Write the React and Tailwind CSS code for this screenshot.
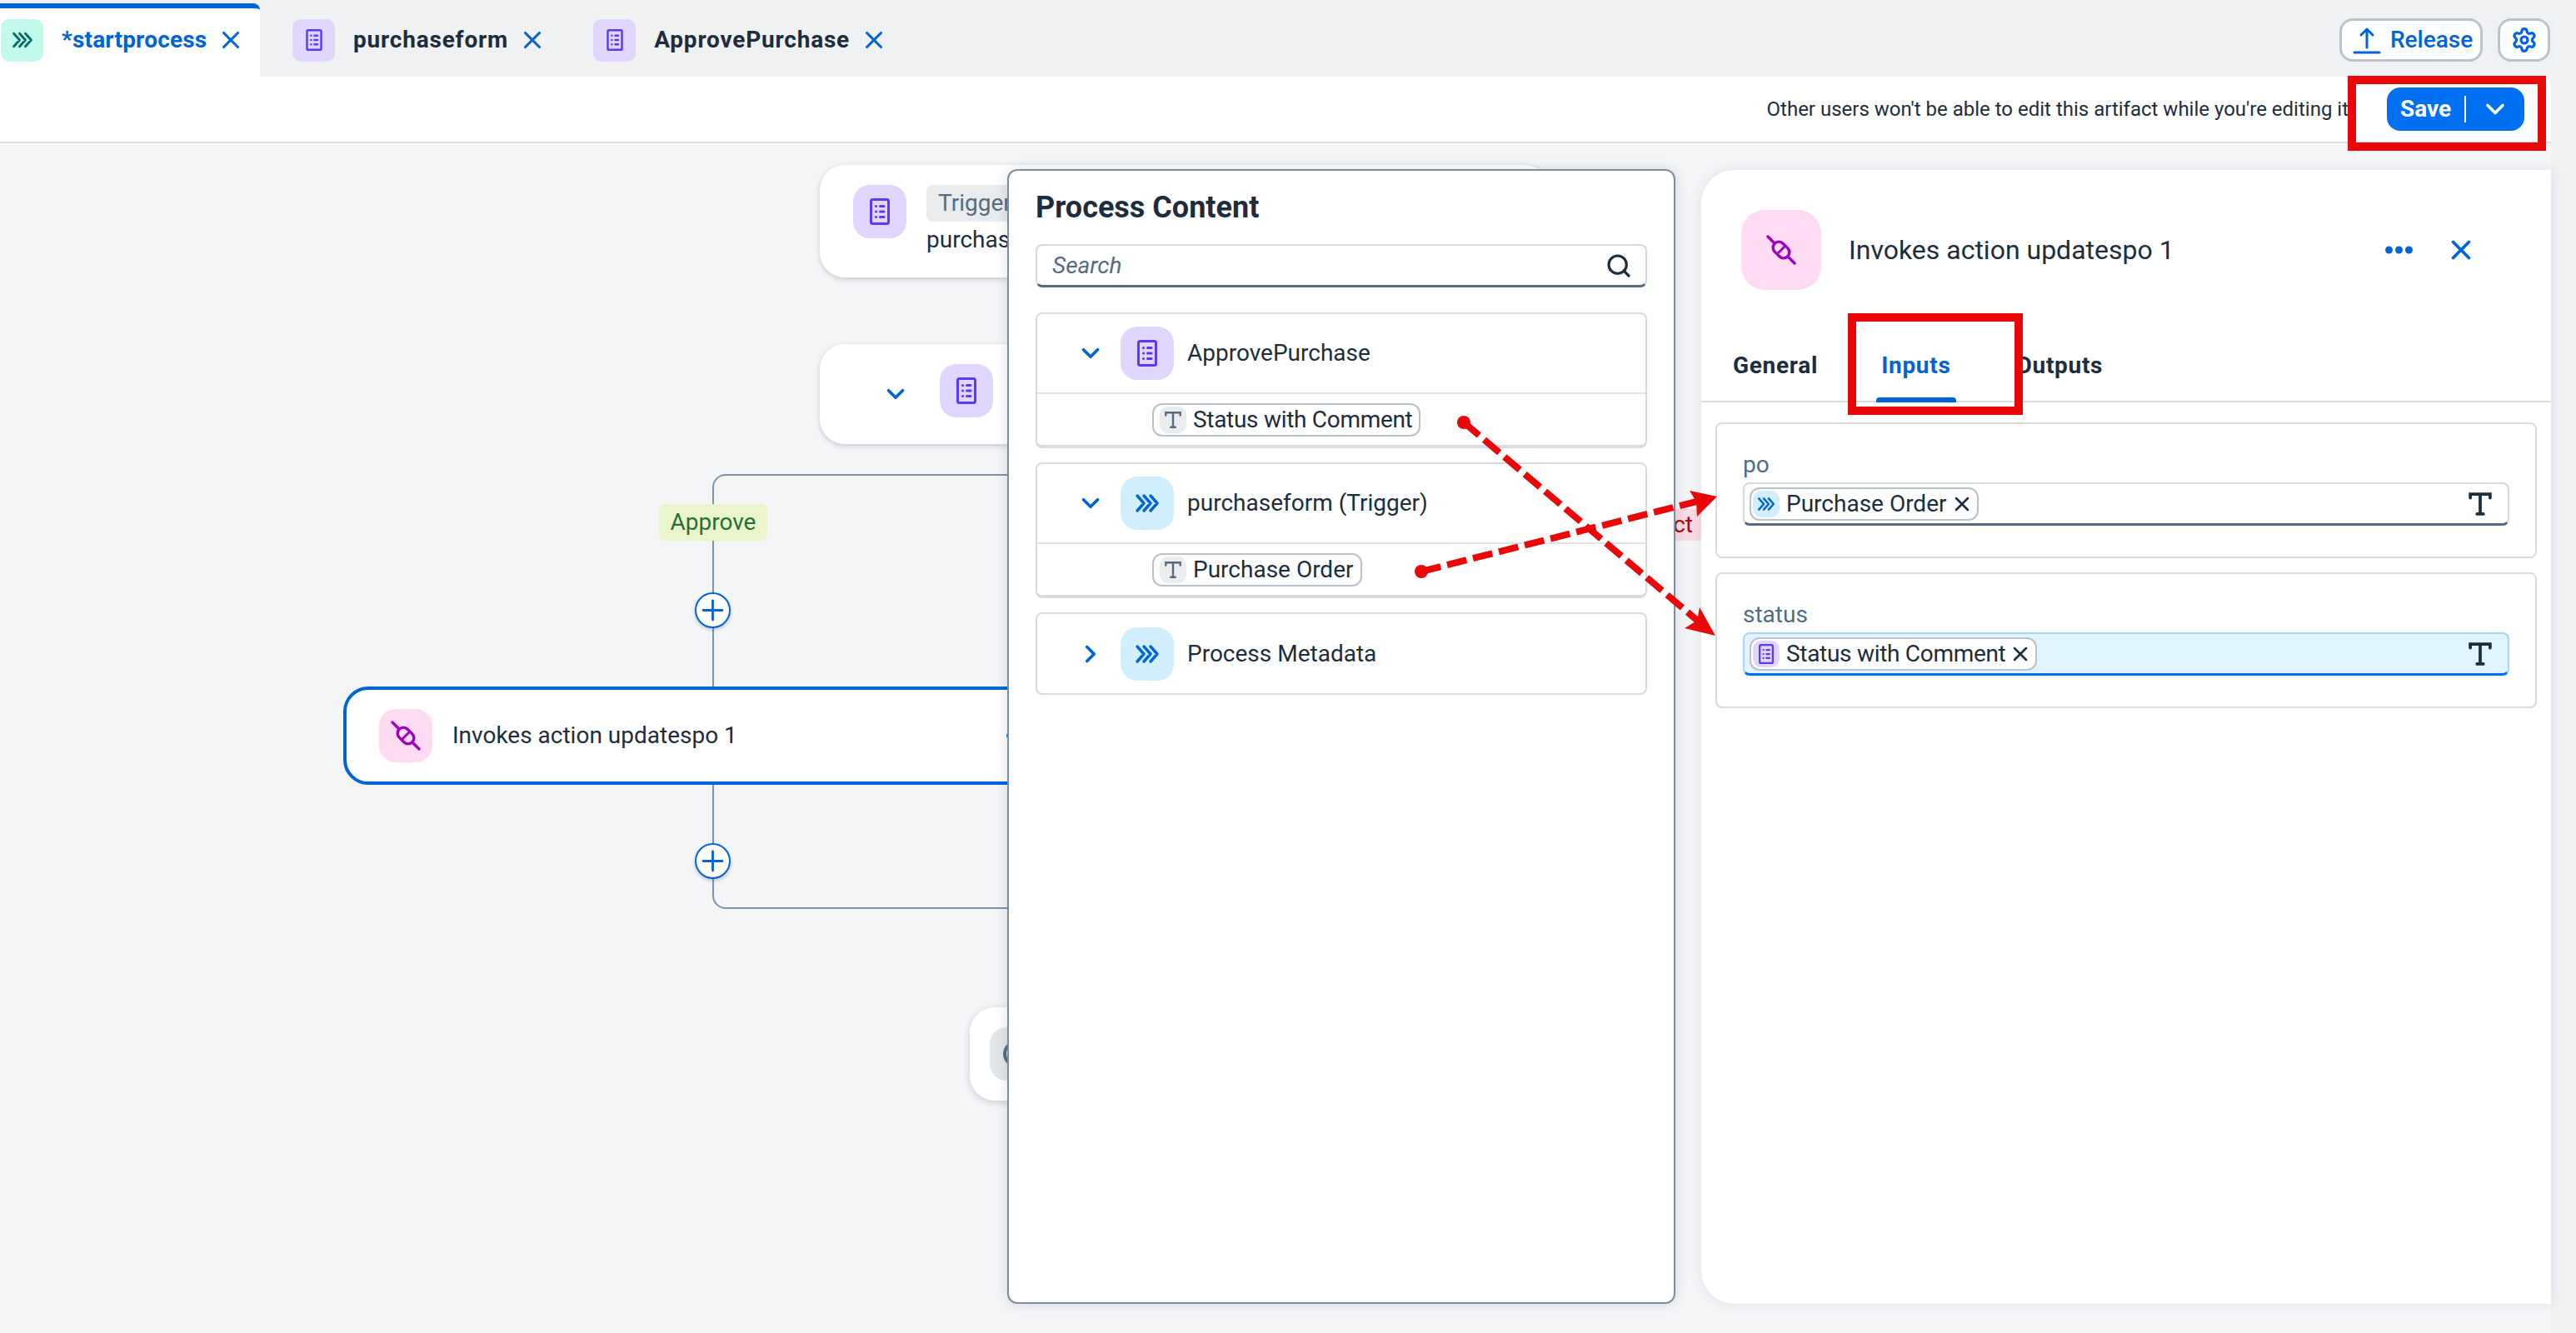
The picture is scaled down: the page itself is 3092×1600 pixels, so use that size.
import React from "react";
import { ChevronDown, ChevronRight, Search, Settings, X } from "lucide-react";

// form icon, the little sheet with dotted rows
const FormIcon = ({ w = 24, h = 32 }) => (
  <svg width={w} height={h} viewBox="0 0 24 32" fill="none" stroke="#5d36ff">
    <rect x="1.5" y="1.5" width="21" height="29" rx="2" strokeWidth="3" />
    <g strokeWidth="3" strokeLinecap="round">
      <path d="M7.5 9.5h.1M7.5 16h.1M7.5 22.5h.1M12.5 9.5h4.5M12.5 16h4.5M12.5 22.5h4.5" />
    </g>
  </svg>
);

const ChevronsIcon = ({ size = 30, color = "#0064d9" }) => (
  <svg width={size} height={size} viewBox="0 0 30 30" fill="none" stroke={color} strokeWidth="3.4" strokeLinecap="round" strokeLinejoin="round">
    <path d="M3 6l8 9-8 9M11 6l8 9-8 9M19 6l8 9-8 9" />
  </svg>
);

const PlugIcon = ({ size = 36 }) => (
  <svg width={size} height={size} viewBox="0 0 36 36" fill="none" stroke="#a100c2" strokeWidth="3.4" strokeLinecap="round" strokeLinejoin="round">
    <path d="M2 2l8 8M26 26l8 8" />
    <rect x="-11" y="-7" width="22" height="14" rx="7" transform="translate(18 18) rotate(45)" />
    <path d="M14 22l8-8" strokeWidth="3" />
  </svg>
);

const TextIcon = ({ size = 24, color = "#556b82", stroke = 2.6 }) => (
  <svg width={size} height={size} viewBox="0 0 24 24" fill="none" stroke={color} strokeWidth={stroke} strokeLinecap="round">
    <path d="M2.5 6V2.5h19V6M12 2.5v19M9 21.5h6" />
  </svg>
);

const DotsIcon = () => (
  <svg width="33" height="10" viewBox="0 0 33 10" fill="#0064d9">
    <circle cx="4.5" cy="5" r="4.5" />
    <circle cx="16.5" cy="5" r="4.5" />
    <circle cx="28.5" cy="5" r="4.5" />
  </svg>
);

const Tile = ({ size = 64, h, bg, children, round = "rounded-[20px]" }) => (
  <div className={`flex shrink-0 items-center justify-center ${round} ${bg}`} style={{ width: size, height: h || size }}>
    {children}
  </div>
);

const Tab = ({ icon, bg, label, active, margin = "" }) => (
  <div className={`flex h-full items-center ${margin} ${active ? "w-[312px] rounded-tr-[8px] border-t-[6px] border-[#0064d9] bg-white pb-[6px] pl-px" : ""}`}>
    <Tile size={51} bg={bg} round="rounded-[10px]">{icon}</Tile>
    <span className={`ml-[22px] text-[28px] font-bold ${active ? "tracking-[0.2px] text-[#0064d9]" : "tracking-[0.8px] text-[#1d2d3e]"}`}>{label}</span>
    <X className="ml-[12px] text-[#0064d9]" size={34} strokeWidth={2.2} />
  </div>
);

const FieldChip = ({ icon, bg, label, tight }) => (
  <div className="ml-[6px] flex h-[40px] items-center rounded-[12px] border-2 border-[#b9c1c9] bg-white pl-[2px] pr-[4px]">
    <div className={`flex h-[32px] w-[32px] items-center justify-center rounded-[10px] ${bg}`}>{icon}</div>
    <span className={`ml-[8px] text-[28px] leading-none text-[#1d2d3e] ${tight ? "tracking-[-0.3px]" : ""}`}>{label}</span>
    <X className="ml-[4px] text-[#1d2d3e]" size={28} strokeWidth={2.2} />
  </div>
);

const TreeCard = ({ open, icon, bg, label, chip, tight }) => (
  <div className={`rounded-[8px] border-2 border-[#d9dcdf] ${chip ? "border-b-[4px] h-[163px]" : "h-[99px]"}`}>
    <div className={`flex h-[96px] items-center pl-[47px] ${chip ? "border-b-2 border-[#e0e2e4]" : ""}`}>
      {open ? (
        <ChevronDown className="text-[#0064d9]" size={34} strokeWidth={2.6} />
      ) : (
        <ChevronRight className="text-[#0064d9]" size={34} strokeWidth={2.6} />
      )}
      <div className="ml-[19px]">
        <Tile bg={bg}>{icon}</Tile>
      </div>
      <span className="ml-[16px] text-[28px] text-[#1d2d3e]">{label}</span>
    </div>
    {chip && (
      <div className="pl-[138px] pt-[11px]">
        <div className="inline-flex h-[40px] items-center rounded-[12px] border-2 border-[#b9c1c9] pl-[7px] pr-[8px]">
          <div className="flex h-[32px] w-[32px] items-center justify-center rounded-[10px] bg-[#eaecee]">
            <TextIcon size={22} />
          </div>
          <span className={`ml-[8px] text-[28px] leading-none text-[#1d2d3e] ${tight ? "tracking-[-0.3px]" : ""}`}>{chip}</span>
        </div>
      </div>
    )}
  </div>
);

const InputCard = ({ label, active, children }) => (
  <div className="h-[163px] rounded-[8px] border-2 border-[#d9dcdf] px-[31px] pt-[32px]">
    <div className="h-[38px] text-[28px] leading-[34px] text-[#556b82]">{label}</div>
    <div
      className={`flex h-[52px] items-center justify-between rounded-[8px] border-2 border-b-[3px] pr-[18px] ${
        active ? "border-[#a8d3fa] border-b-[#0070f2] bg-[#e1f4ff]" : "border-[#d5dadd] border-b-[#556b82] bg-white"
      }`}
    >
      {children}
      <TextIcon size={30} color="#1d2d3e" stroke={3} />
    </div>
  </div>
);

export default function App() {
  return (
    <div className="relative h-[1600px] w-[3092px] overflow-hidden bg-[#eff1f3] font-['Roboto',sans-serif]">
      <div className="flex h-full w-[3062px] flex-col">
        {/* Tabs */}
        <div className="flex h-[92px] items-stretch justify-between pt-[4px]">
          <div className="flex items-stretch">
            <Tab active label="*startprocess" bg="bg-[#c2fbee]" icon={<ChevronsIcon size={26} color="#0e6b6b" />} />
            <Tab margin="ml-[39px]" label="purchaseform" bg="bg-[#e0d6ff]" icon={<FormIcon w={20} h={26} />} />
            <Tab margin="ml-[56px]" label="ApprovePurchase" bg="bg-[#e0d6ff]" icon={<FormIcon w={20} h={26} />} />
          </div>
          <div className="flex items-center gap-[18px] pr-px">
            <button className="flex h-[52px] w-[172px] items-center rounded-[16px] border-[3px] border-[#bcc3ca] bg-white pl-[13px] text-[28px] font-medium text-[#0064d9]">
              <svg width="34" height="34" viewBox="0 0 34 34" fill="none" stroke="#0064d9" strokeWidth="3" strokeLinecap="round" strokeLinejoin="round">
                <path d="M17 26V4M10 11l7-7 7 7M2 32h30" />
              </svg>
              <span className="ml-[11px]">Release</span>
            </button>
            <button className="flex h-[52px] w-[63px] items-center justify-center rounded-[16px] border-[3px] border-[#bcc3ca] bg-white text-[#0064d9]">
              <Settings size={32} strokeWidth={2.4} />
            </button>
          </div>
        </div>

        {/* Toolbar */}
        <div className="flex h-[80px] items-center justify-end rounded-tr-[12px] border-b-2 border-[#d9dcdf] bg-white pr-[32px]">
          <span className="mr-[46px] text-[24px] text-[#1d2d3e]">Other users won't be able to edit this artifact while you're editing it</span>
          <button className="flex h-[52px] w-[165px] items-center rounded-[16px] bg-[#0070f2] text-[28px] font-bold text-white">
            <span className="ml-[16px]">Save</span>
            <span className="ml-[16px] h-[32px] w-[2px] bg-white" />
            <ChevronDown className="ml-[17px]" size={36} strokeWidth={2.4} />
          </button>
        </div>

        {/* Canvas with the two side panels on top */}
        <div className="relative flex flex-1 justify-end gap-[31px] bg-[#f4f5f7] pb-[35px] pt-[31px]">
          {/* Process nodes */}
          <div className="absolute left-[984px] top-[26px] flex h-[135px] w-[876px] items-start rounded-[30px] bg-white pl-[40px] pt-[24px] shadow-[0_2px_6px_rgba(30,45,60,0.22)]">
            <Tile bg="bg-[#e0d6ff]"><FormIcon /></Tile>
            <div className="ml-[24px]">
              <div className="flex h-[44px] items-center rounded-[8px] bg-[#e9ebed] px-[14px] text-[28px] text-[#556b82]">Trigger</div>
              <div className="text-[28px] leading-[44px] text-[#1d2d3e]">purchaseform</div>
            </div>
          </div>
          <div className="absolute left-[984px] top-[241px] flex h-[120px] w-[876px] items-center rounded-[30px] bg-white pl-[74px] shadow-[0_2px_6px_rgba(30,45,60,0.22)]">
            <ChevronDown className="text-[#0064d9]" size={34} strokeWidth={2.6} />
            <div className="mb-[8px] ml-[36px]">
              <Tile bg="bg-[#e0d6ff]"><FormIcon /></Tile>
            </div>
          </div>

          {/* Branch lines */}
          <div className="absolute left-[855px] top-[397px] h-[522px] w-[600px] rounded-l-[16px] border-2 border-r-0 border-[#7d93ab]" />
          <div className="absolute left-[791px] top-[433px] flex h-[44px] w-[130px] items-center justify-center rounded-[8px] bg-[#ebf5cb] text-[28px] text-[#256f3a]">Approve</div>
          <div className="absolute left-[1800px] top-[439px] flex h-[38px] w-[242px] items-center justify-end rounded-[4px] bg-[#fbd9e5] pr-[10px] text-[28px] text-[#aa0808]">Reject</div>
          {[539, 840].map((top) => (
            <div key={top} className={`absolute left-[834px] flex h-[43px] w-[43px] items-center justify-center rounded-full border-2 border-[#0064d9] bg-white text-[#0064d9] shadow-[0_2px_4px_rgba(30,45,60,0.25)] ${top === 539 ? "top-[539px]" : "top-[840px]"}`}>
              <svg width="27" height="27" viewBox="0 0 27 27" stroke="#0064d9" strokeWidth="2.8" strokeLinecap="round"><path d="M13.5 2v23M2 13.5h23" /></svg>
            </div>
          ))}
          <div className="absolute left-[412px] top-[652px] flex h-[118px] w-[900px] items-center rounded-[30px] border-4 border-[#0064d9] bg-white pl-[39px]">
            <Tile bg="bg-[#ffdcf3]"><PlugIcon /></Tile>
            <span className="ml-[24px] text-[28px] text-[#1d2d3e]">Invokes action updatespo 1</span>
            <div className="absolute left-[792px]"><DotsIcon /></div>
          </div>
          <div className="absolute left-[1164px] top-[1037px] flex h-[112px] w-[300px] items-center rounded-[30px] bg-white pl-[24px] shadow-[0_2px_8px_rgba(30,45,60,0.2)]">
            <div className="flex h-[64px] w-[64px] items-center justify-center rounded-[20px] bg-[#e4e7ea]">
              <div className="h-[32px] w-[32px] rounded-full border-[4px] border-[#556b82]" />
            </div>
          </div>

          {/* Process Content */}
          <div className="relative flex w-[802px] flex-col rounded-[12px] border-2 border-[#7f8c9a] bg-white px-[32px] shadow-[0_0_16px_rgba(30,45,60,0.15)]">
            <h2 className="mt-[22px] h-[40px] text-[36px] font-bold leading-[44px] text-[#1d2d3e]">Process Content</h2>
            <div className="mt-[26px] flex h-[52px] items-center justify-between rounded-[8px] border-2 border-b-[3px] border-[#d5dadd] border-b-[#556b82] pl-[18px] pr-[16px]">
              <span className="text-[28px] italic text-[#556b82]">Search</span>
              <Search className="text-[#1d2d3e]" size={32} strokeWidth={2.4} />
            </div>
            <div className="mt-[30px] flex flex-col gap-[17px]">
              <TreeCard open label="ApprovePurchase" bg="bg-[#e0d6ff]" icon={<FormIcon />} chip="Status with Comment" tight />
              <TreeCard open label="purchaseform (Trigger)" bg="bg-[#d1efff]" icon={<ChevronsIcon />} chip="Purchase Order" />
              <TreeCard label="Process Metadata" bg="bg-[#d1efff]" icon={<ChevronsIcon />} />
            </div>
          </div>

          {/* Properties */}
          <div className="relative mt-px flex w-[1020px] flex-col rounded-l-[40px] bg-white shadow-[0_0_16px_rgba(30,45,60,0.1)]">
            <div className="flex h-[144px] items-end pl-[48px] pr-[89px]">
              <div className="flex w-full items-center">
                <Tile size={96} bg="bg-[#ffdcf3]" round="rounded-[28px]"><PlugIcon /></Tile>
                <span className="ml-[33px] flex-1 text-[32px] text-[#1d2d3e]">Invokes action updatespo 1</span>
                <DotsIcon />
                <X className="ml-[39px] text-[#0064d9]" size={38} strokeWidth={2.4} />
              </div>
            </div>
            <div className="mt-[45px] flex h-[90px] items-stretch border-b-2 border-[#d9dcdf] pl-[38px] text-[28px] font-bold tracking-[0.7px]">
              <span className="flex items-center pt-[4px] text-[#1d2d3e]">General</span>
              <span className="relative ml-[76px] flex items-center pt-[4px] text-[#0064d9]">
                Inputs
                <span className="absolute -bottom-[2px] -left-[6px] -right-[6px] h-[6px] rounded-t-[4px] bg-[#0064d9]" />
              </span>
              <span className="ml-[78px] flex items-center pt-[4px] text-[#1d2d3e]">Outputs</span>
            </div>
            <div className="mt-[24px] flex flex-col gap-[17px] px-[17px]">
              <InputCard label="po">
                <FieldChip label="Purchase Order" bg="bg-[#d1efff]" icon={<ChevronsIcon size={22} />} />
              </InputCard>
              <InputCard label="status" active>
                <FieldChip label="Status with Comment" tight bg="bg-[#e0d6ff]" icon={<FormIcon w={18} h={24} />} />
              </InputCard>
            </div>
          </div>
        </div>
      </div>

      {/* Red annotations */}
      <div className="absolute left-[2818px] top-[91px] h-[90px] w-[238px] border-[10px] border-[#ea0707]" />
      <div className="absolute left-[2218px] top-[376px] h-[122px] w-[210px] border-[10px] border-[#ea0707]" />
      <svg className="absolute left-0 top-0" width="3092" height="1600" fill="none">
        <path d="M1757 507L2040 747" stroke="#ea0707" strokeWidth="8" strokeDasharray="24 8" />
        <circle cx="1757" cy="507" r="8" fill="#ea0707" />
        <path d="M2059 763L2022 754L2037 745L2040 729Z" fill="#ea0707" />
        <path d="M1706 686L2040 601" stroke="#ea0707" strokeWidth="8" strokeDasharray="24 8" />
        <circle cx="1706" cy="686" r="8" fill="#ea0707" />
        <path d="M2061 596L2037 620L2036 602L2028 589Z" fill="#ea0707" />
      </svg>
    </div>
  );
}
